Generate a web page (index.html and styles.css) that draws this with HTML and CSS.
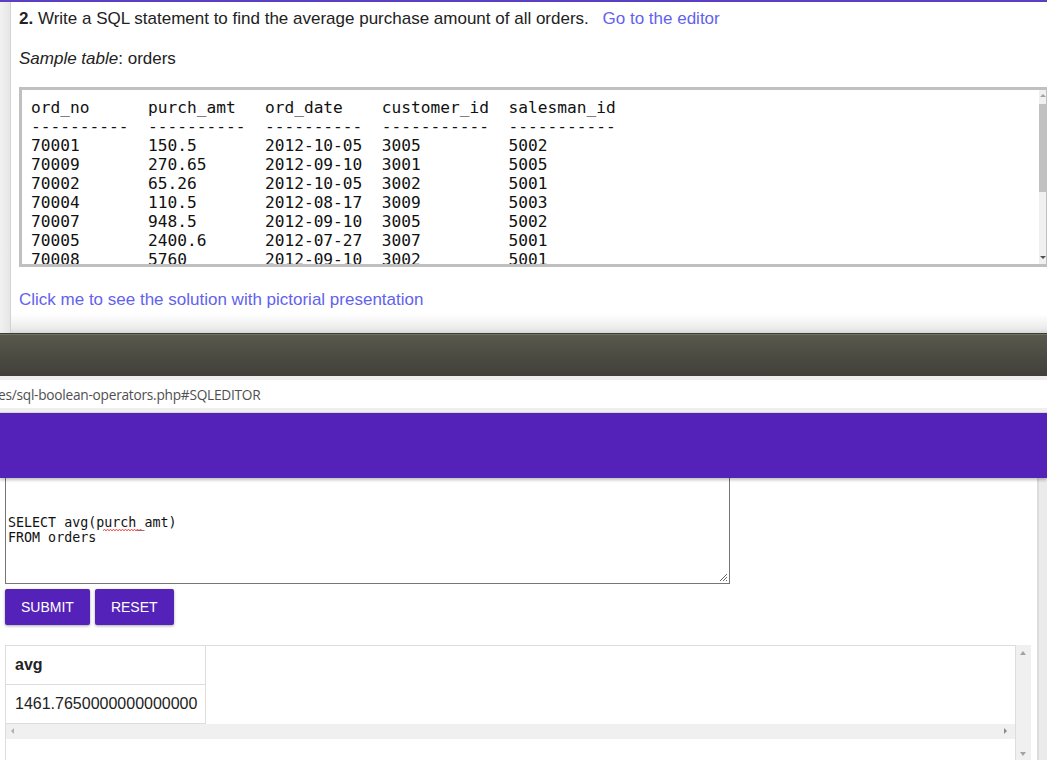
FILE: index.html
```html
<!DOCTYPE html>
<html>
<head>
<meta charset="utf-8">
<link rel="stylesheet" href="styles.css">
</head>
<body>
<div class="page">
  <section class="top">
    <div class="left-strip"></div>
    <div class="top-content">
      <p class="q"><b>2.</b> Write a SQL statement to find the average purchase amount of all orders. <a class="link go">Go to the editor</a></p>
      <p class="sample"><i>Sample table</i>: orders</p>
      <div class="prebox">
<pre>ord_no      purch_amt   ord_date    customer_id  salesman_id
----------  ----------  ----------  -----------  -----------
70001       150.5       2012-10-05  3005         5002
70009       270.65      2012-09-10  3001         5005
70002       65.26       2012-10-05  3002         5001
70004       110.5       2012-08-17  3009         5003
70007       948.5       2012-09-10  3005         5002
70005       2400.6      2012-07-27  3007         5001
70008       5760        2012-09-10  3002         5001</pre>
        <div class="vbar">
          <span class="arr up"></span>
          <span class="thumb"></span>
          <span class="arr down"></span>
        </div>
      </div>
      <p class="click"><a class="link">Click me to see the solution with pictorial presentation</a></p>
    </div>
  </section>
  <div class="titlebar"></div>
  <div class="urlbar"><div class="url">es/sql-boolean-operators.php#SQLEDITOR</div></div>
  <div class="purple"></div>
  <section class="lower">
    <div class="lower-main">
      <div class="editor">
        <div class="code">SELECT avg(purch_amt)
FROM orders</div>
        <svg class="squiggle" width="40" height="4" viewBox="0 0 40 4"><path d="M0 3 L1.5 1 L3 3 L4.5 1 L6 3 L7.5 1 L9 3 L10.5 1 L12 3 L13.5 1 L15 3 L16.5 1 L18 3 L19.5 1 L21 3 L22.5 1 L24 3 L25.5 1 L27 3 L28.5 1 L30 3 L31.5 1 L33 3 L34.5 1 L36 3 L37.5 1 L39 3" fill="none" stroke="#e33" stroke-width="0.8"/></svg>
        <svg class="grip" width="9" height="9" viewBox="0 0 9 9"><path d="M8 1 L1 8 M8 4 L4 8 M8 7 L7 8" stroke="#666" stroke-width="1"/></svg>
      </div>
      <div class="buttons">
        <button class="btn">SUBMIT</button>
        <button class="btn">RESET</button>
      </div>
      <div class="result-row">
        <div class="result-box">
          <table class="rt">
            <tr><th>avg</th></tr>
            <tr><td>1461.7650000000000000</td></tr>
          </table>
          <div class="hbar">
            <span class="harr left"></span>
            <span class="harr right"></span>
          </div>
        </div>
        <div class="rvbar">
          <span class="rarr up"></span>
          <span class="rarr down"></span>
        </div>
      </div>
    </div>
    <div class="page-strip"></div>
  </section>
</div>
</body>
</html>
```
FILE: styles.css
```css
html, body {
  margin: 0;
  padding: 0;
  width: 1047px;
  height: 760px;
  overflow: hidden;
  background: #fff;
}
.page {
  display: flex;
  flex-direction: column;
  width: 1047px;
  height: 760px;
  font-family: "Liberation Sans", Arial, sans-serif;
}
.top {
  display: flex;
  height: 333px;
  border-top: 2px solid #5b3fc2;
  box-sizing: border-box;
  position: relative;
  background: linear-gradient(to bottom, #fff 0, #fff 312px, #ececec 326px, #d8d8d8 331px);
}
.left-strip {
  width: 10px;
  flex: none;
  background: linear-gradient(to right, #f1f1f1, #e6e6e6);
  border-right: 1px solid #d3d3d3;
}
.top-content {
  flex: 1;
  padding-left: 8px;
  min-width: 0;
  color: #222;
}
.top-content p {
  margin: 0;
  font-size: 17px;
  line-height: 22px;
}
.q { padding-top: 6px; }
.go { margin-left: 9px; }
.link { color: #6262ee; text-decoration: none; }
.sample { margin-top: 18px !important; }
.prebox {
  position: relative;
  margin-top: 17px;
  height: 180px;
  width: 1030px;
  box-sizing: border-box;
  border: 3px solid #c0c0c0;
  overflow: hidden;
  background: #fff;
}
.prebox pre {
  margin: 0;
  padding: 8px 0 0 9px;
  font-family: "DejaVu Sans Mono", monospace;
  font-size: 16.2px;
  line-height: 19px;
  color: #111;
}
.vbar {
  position: absolute;
  top: 0;
  right: 0;
  width: 7px;
  height: 100%;
  background: #f0f0f0;
}
.vbar .thumb {
  position: absolute;
  left: 0;
  top: 14px;
  width: 7px;
  height: 88px;
  background: #c1c1c1;
}
.vbar .arr {
  position: absolute;
  left: 1px;
  width: 0;
  height: 0;
  border-left: 3px solid transparent;
  border-right: 3px solid transparent;
}
.vbar .arr.up { top: 4px; border-bottom: 3px solid #a3a3a3; }
.vbar .arr.down { bottom: 5px; border-top: 3px solid #505050; }
.click { margin-top: 22px !important; }

.titlebar {
  height: 43px;
  flex: none;
  box-sizing: border-box;
  border-top: 1px solid #3b3b38;
  box-shadow: inset 0 1px 0 #727164;
  background: linear-gradient(to bottom, #5a594d, #403f39);
}
.urlbar {
  height: 37px;
  flex: none;
  box-sizing: border-box;
  background: #f0efed;
  padding: 4px 0 5px;
  border-bottom: 1px solid #dcdbd8;
}
.url {
  background: #fff;
  height: 28px;
  line-height: 29px;
  font-family: "Open Sans", "Noto Sans", sans-serif;
  font-size: 13.7px;
  color: #4f4f4f;
  margin-left: -2px;
  letter-spacing: -0.25px;
}
.purple {
  height: 65px;
  flex: none;
  background: #5422b8;
  box-shadow: 0 2px 3px rgba(0,0,0,0.25);
  position: relative;
  z-index: 2;
}
.lower {
  flex: 1;
  display: flex;
  min-height: 0;
}
.lower-main {
  flex: 1;
  padding-left: 5px;
  min-width: 0;
}
.page-strip {
  width: 8px;
  flex: none;
  background: #ebebeb;
  border-left: 2px solid #dcdcdc;
}
.editor {
  position: relative;
  width: 725px;
  height: 106px;
  box-sizing: border-box;
  border: 1px solid #767676;
  border-top: none;
  padding: 37px 0 0 2px;
}
.code {
  font-family: "DejaVu Sans Mono", monospace;
  font-size: 13.33px;
  line-height: 15px;
  color: #111;
  white-space: pre;
}
.squiggle {
  position: absolute;
  left: 97px;
  top: 50px;
}
.grip {
  position: absolute;
  right: 1px;
  bottom: 1px;
}
.buttons {
  display: flex;
  gap: 5px;
  margin-top: 5px;
}
.btn {
  height: 36px;
  padding: 0 16px;
  border: none;
  border-radius: 2px;
  background: #5422b8;
  color: #fff;
  font-family: "Liberation Sans", Arial, sans-serif;
  font-size: 14px;
  box-shadow: 0 1px 3px rgba(0,0,0,0.35);
}
.result-row {
  display: flex;
  margin-top: 20px;
}
.result-box {
  width: 1011px;
  box-sizing: border-box;
  border: 1px solid #dddddd;
  background: #fff;
}
.rt {
  border-collapse: collapse;
  font-size: 16px;
  color: #222;
}
.rt th, .rt td {
  border: 1px solid #dddddd;
  border-top: none;
  border-left: none;
  text-align: left;
  padding: 8px 8px 8px 9px;
  line-height: 22px;
  height: 22px;
}
.rt th { width: 182px; }
.hbar {
  position: relative;
  height: 15px;
  background: #f0f0f0;
}
.harr {
  position: absolute;
  top: 4px;
  width: 0;
  height: 0;
  border-top: 3px solid transparent;
  border-bottom: 3px solid transparent;
}
.harr.left { left: 5px; border-right: 3px solid #b0b0b0; }
.harr.right { right: 8px; border-left: 3px solid #8a8a8a; }
.rvbar {
  position: relative;
  width: 15px;
  height: 116px;
  background: #f0f0f0;
}
.rarr {
  position: absolute;
  left: 4px;
  width: 0;
  height: 0;
  border-left: 3.5px solid transparent;
  border-right: 3.5px solid transparent;
}
.rarr.up { top: 6px; border-bottom: 4px solid #a3a3a3; }
.rarr.down { bottom: 5px; border-top: 4px solid #a3a3a3; }
```
